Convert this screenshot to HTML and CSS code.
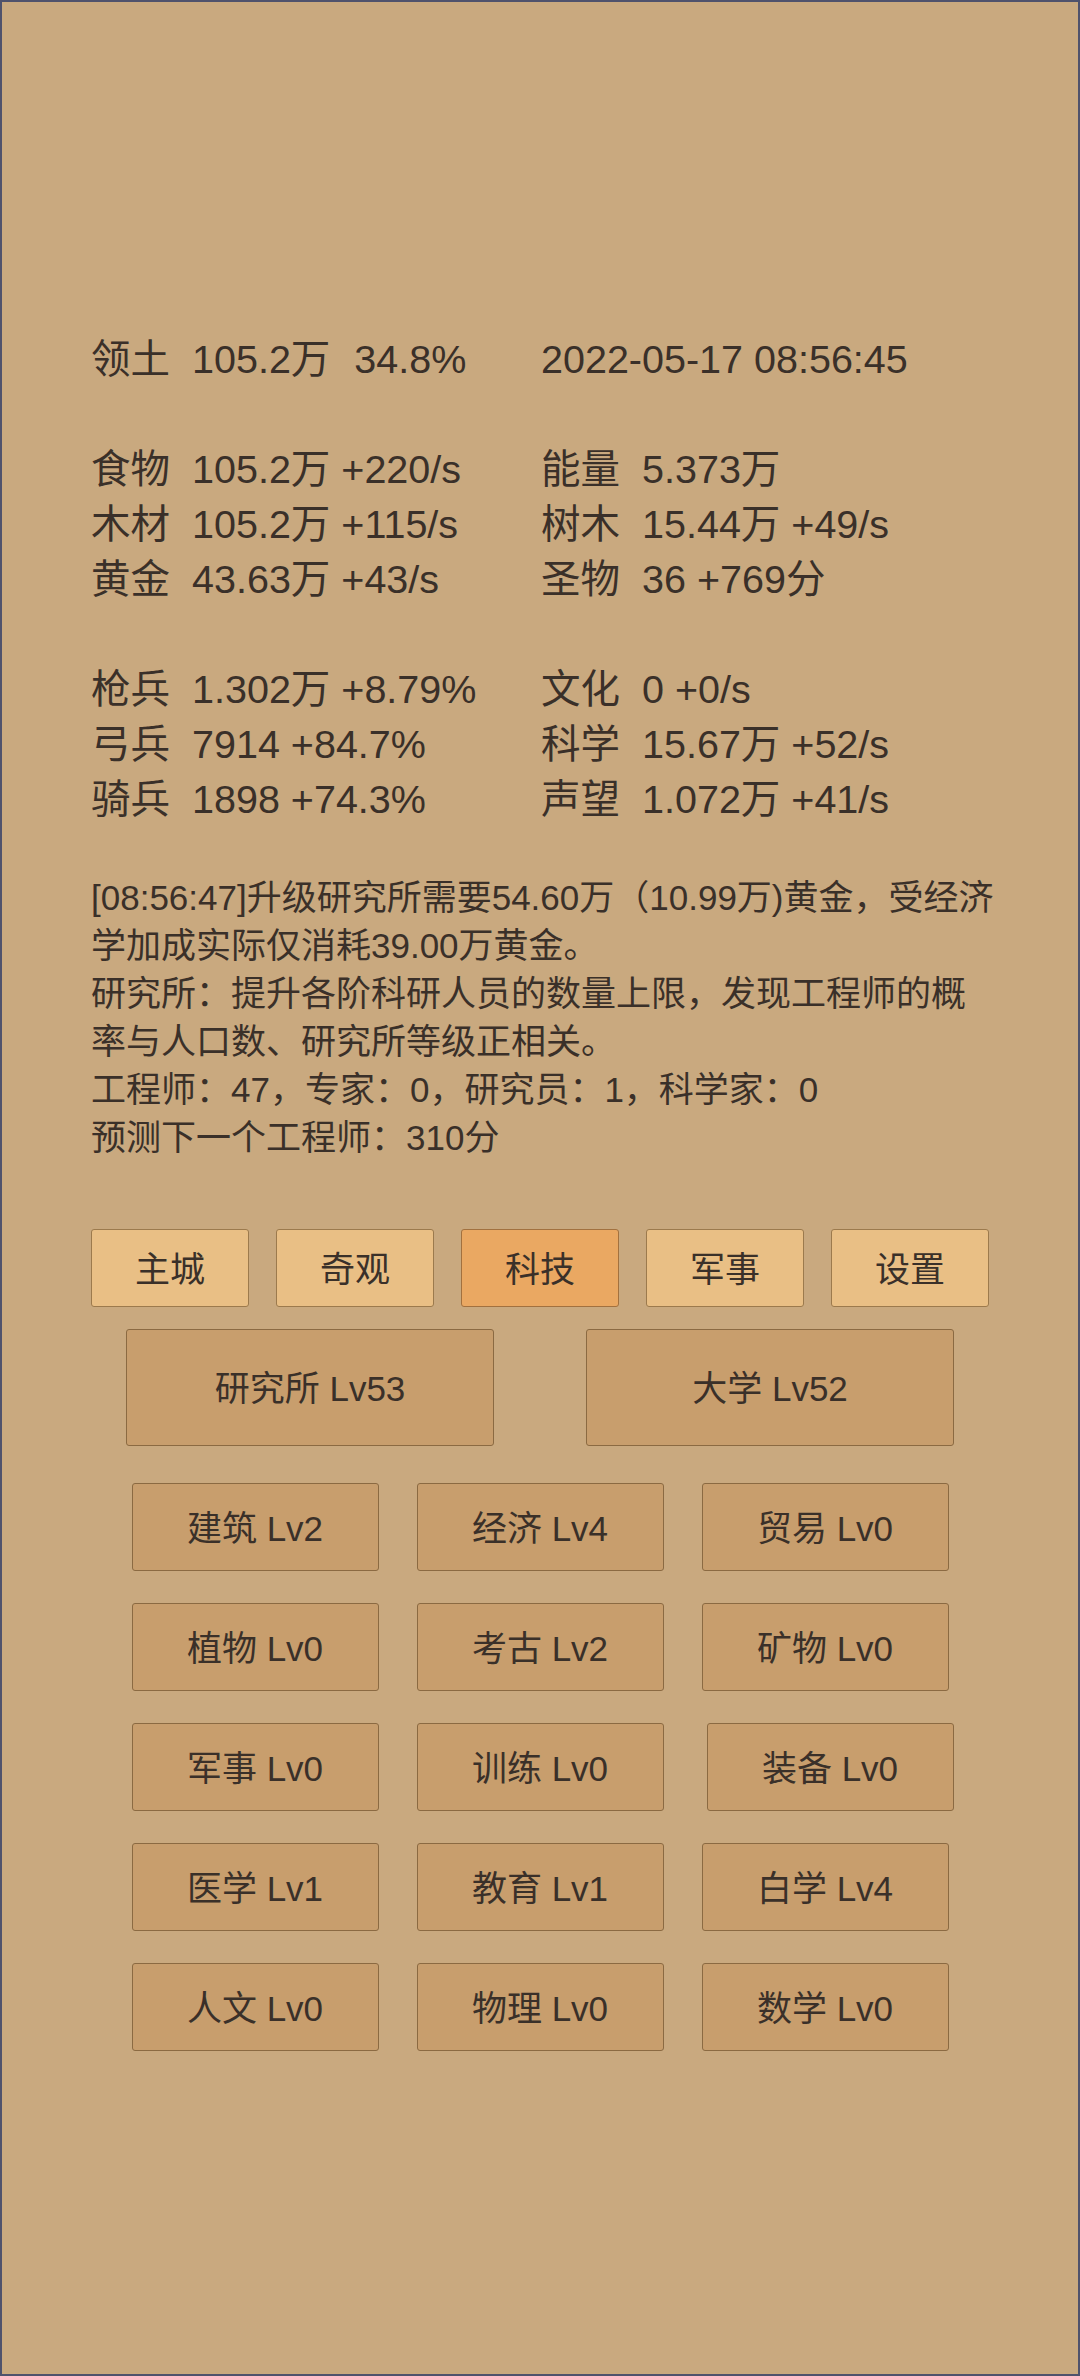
FILE: index.html
```html
<!DOCTYPE html>
<html lang="zh">
<head>
<meta charset="utf-8">
<title>科技</title>
<link rel="stylesheet" href="styles.css">
</head>
<body>
<div class="page">
  <div class="stats">
    <div class="group">
      <span class="lbl">领土</span><span class="val">105.2万<span class="sep">34.8%</span></span><span class="date">2022-05-17 08:56:45</span>
    </div>
    <div class="group">
      <span class="lbl">食物</span><span class="val">105.2万 +220/s</span><span class="lbl">能量</span><span class="val">5.373万</span>
      <span class="lbl">木材</span><span class="val">105.2万 +115/s</span><span class="lbl">树木</span><span class="val">15.44万 +49/s</span>
      <span class="lbl">黄金</span><span class="val">43.63万 +43/s</span><span class="lbl">圣物</span><span class="val">36 +769分</span>
    </div>
    <div class="group">
      <span class="lbl">枪兵</span><span class="val">1.302万 +8.79%</span><span class="lbl">文化</span><span class="val">0 +0/s</span>
      <span class="lbl">弓兵</span><span class="val">7914 +84.7%</span><span class="lbl">科学</span><span class="val">15.67万 +52/s</span>
      <span class="lbl">骑兵</span><span class="val">1898 +74.3%</span><span class="lbl">声望</span><span class="val">1.072万 +41/s</span>
    </div>
  </div>

  <div class="log">
    <p>[08:56:47]升级研究所需要54.60万（10.99万)黄金，受经济学加成实际仅消耗39.00万黄金。</p>
    <p>研究所：提升各阶科研人员的数量上限，发现工程师的概率与人口数、研究所等级正相关。</p>
    <p>工程师：47，专家：0，研究员：1，科学家：0</p>
    <p>预测下一个工程师：310分</p>
  </div>

  <div class="tabs">
    <div class="tab">主城</div>
    <div class="tab">奇观</div>
    <div class="tab active">科技</div>
    <div class="tab">军事</div>
    <div class="tab">设置</div>
  </div>

  <div class="big-row">
    <div class="btn big">研究所 Lv53</div>
    <div class="btn big">大学 Lv52</div>
  </div>

  <div class="tech-grid">
    <div class="btn">建筑 Lv2</div>
    <div class="btn">经济 Lv4</div>
    <div class="btn">贸易 Lv0</div>
    <div class="btn">植物 Lv0</div>
    <div class="btn">考古 Lv2</div>
    <div class="btn">矿物 Lv0</div>
    <div class="btn">军事 Lv0</div>
    <div class="btn">训练 Lv0</div>
    <div class="btn shifted">装备 Lv0</div>
    <div class="btn">医学 Lv1</div>
    <div class="btn">教育 Lv1</div>
    <div class="btn">白学 Lv4</div>
    <div class="btn">人文 Lv0</div>
    <div class="btn">物理 Lv0</div>
    <div class="btn">数学 Lv0</div>
  </div>
</div>
</body>
</html>
```

FILE: styles.css
```css
* { box-sizing: border-box; }

html, body {
  margin: 0;
  padding: 0;
}

body {
  width: 1080px;
  height: 2376px;
  font-family: "Liberation Sans", "Noto Sans CJK SC", sans-serif;
  color: #3a3029;
}

.page {
  width: 1080px;
  height: 2376px;
  background: #c9a97f;
  border: 2px solid #4f526c;
  padding: 330px 89px 0 89px;
  overflow: hidden;
}

.stats {
  font-size: 39.5px;
  line-height: 55px;
}

.group {
  display: grid;
  grid-template-columns: 101px 349px 101px 1fr;
  white-space: nowrap;
}

.group + .group {
  margin-top: 55px;
}

.sep {
  margin-left: 24px;
}

.date {
  grid-column: 3 / 5;
}

.log {
  margin-top: 47px;
  margin-right: -8px;
  font-size: 35px;
  line-height: 48px;
}

.log p {
  margin: 0;
}

.tabs {
  margin-top: 67px;
  display: flex;
  gap: 27px;
}

.tab {
  flex: 1;
  height: 78px;
  display: flex;
  align-items: center;
  justify-content: center;
  padding-bottom: 4px;
  font-size: 35px;
  background: #e9bf85;
  border: 1px solid #9c7a4d;
  border-radius: 3px;
}

.tab.active {
  background: #eaa862;
  border-color: #a2713f;
}

.btn {
  display: flex;
  align-items: center;
  justify-content: center;
  padding-bottom: 4px;
  font-size: 35px;
  background: #c89e6d;
  border: 1px solid #8b6a42;
  border-radius: 3px;
  height: 88px;
}

.big-row {
  margin-top: 22px;
  display: flex;
  justify-content: center;
  gap: 92px;
}

.btn.big {
  width: 368px;
  height: 117px;
}

.tech-grid {
  margin: 37px auto 0;
  width: 817px;
  display: grid;
  grid-template-columns: repeat(3, 247px);
  column-gap: 38px;
  row-gap: 32px;
}

.btn.shifted {
  margin-left: 5px;
  margin-right: -5px;
}
```
